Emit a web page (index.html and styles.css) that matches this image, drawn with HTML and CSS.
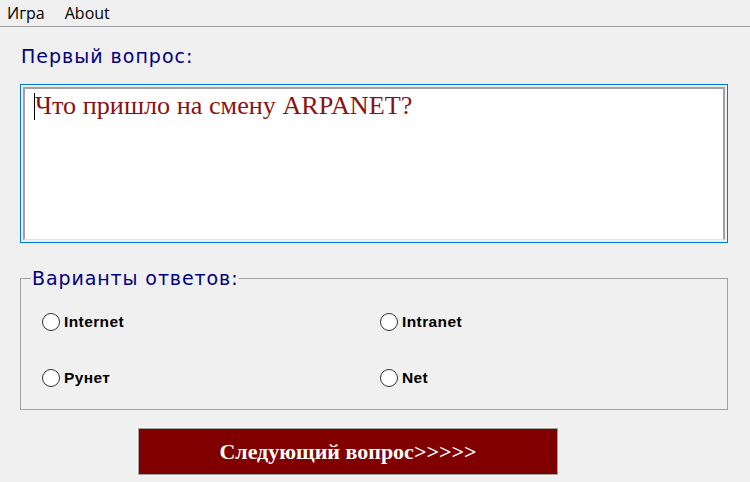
FILE: index.html
```html
<!DOCTYPE html>
<html lang="ru">
<head>
<meta charset="utf-8">
<title>Тест</title>
<link rel="stylesheet" href="styles.css">
</head>
<body>
<div class="menubar">
  <span class="menu-item">Игра</span>
  <span class="menu-item">About</span>
</div>
<main class="content">
  <div class="label">Первый вопрос:</div>
  <div class="question-box">
    <div class="question-inner"><span class="caret"></span>Что пришло на смену ARPANET?</div>
  </div>
  <fieldset class="answers">
    <legend class="legend">Варианты ответов:</legend>
    <div class="grid">
      <label class="option"><span class="radio"></span>Internet</label>
      <label class="option"><span class="radio"></span>Intranet</label>
      <label class="option"><span class="radio"></span>Рунет</label>
      <label class="option"><span class="radio"></span>Net</label>
    </div>
  </fieldset>
  <div class="btn-row">
    <div class="next-btn">Следующий вопрос&gt;&gt;&gt;&gt;&gt;</div>
  </div>
</main>
</body>
</html>
```
FILE: styles.css
```css
html, body {
  margin: 0;
  padding: 0;
  background: #f0f0f0;
  width: 750px;
  height: 482px;
  overflow: hidden;
}
.menubar {
  height: 26px;
  border-bottom: 1px solid #a0a0a0;
  display: flex;
  align-items: center;
  gap: 20px;
  padding-left: 7px;
  font-family: "Open Sans", "Noto Sans", sans-serif;
  font-size: 16px;
  color: #000;
}
.content {
  padding: 0 22px 0 20px;
}
.label {
  margin-top: 18px;
  height: 22px;
  padding-left: 1px;
  font-family: "DejaVu Sans", sans-serif;
  font-size: 19px;
  letter-spacing: 1px;
  line-height: 22px;
  color: #000080;
}
.question-box {
  margin-top: 17px;
  height: 159px;
  border: 1px solid #0078d7;
  padding: 2px;
  box-sizing: border-box;
}
.question-inner {
  height: 100%;
  box-sizing: border-box;
  background: #fff;
  border-top: 2px solid #a0a0a0;
  border-left: 2px solid #a0a0a0;
  border-right: 2px solid #a0a0a0;
  border-bottom: 1px solid #e3e3e3;
  padding: 2px 0 0 9px;
  font-family: "Liberation Serif", serif;
  font-size: 26.2px;
  line-height: 30px;
  color: #8b1212;
}
.caret {
  display: inline-block;
  width: 1px;
  height: 27px;
  background: #000;
  vertical-align: -6px;
}
.answers {
  margin: 24px 0 0 0;
  border: 1px solid #a0a0a0;
  height: 143px;
  box-sizing: border-box;
  padding: 24px 0 0 21px;
  min-width: 0;
}
.legend {
  padding: 0 1px;
  margin-left: -11px;
  font-family: "DejaVu Sans", sans-serif;
  font-size: 19px;
  letter-spacing: 0.9px;
  line-height: 22px;
  color: #000080;
}
.grid {
  display: grid;
  grid-template-columns: 338px 1fr;
  row-gap: 38px;
}
.option {
  display: flex;
  align-items: center;
  gap: 4px;
  height: 18px;
  font-family: "Liberation Sans", Arial, sans-serif;
  font-weight: bold;
  font-size: 15.5px;
  letter-spacing: 0.4px;
  color: #000;
}
.radio {
  width: 16px;
  height: 16px;
  border: 1px solid #333;
  border-radius: 50%;
  background: #fff;
  flex: none;
}
.btn-row {
  display: flex;
  padding-left: 118px;
  margin-top: 18px;
}
.next-btn {
  width: 420px;
  height: 47px;
  box-sizing: border-box;
  border: 1px solid #a0a0a0;
  outline: 1px solid #f8f8f8;
  background: #800000;
  color: #fff;
  font-family: "Liberation Serif", serif;
  font-weight: bold;
  font-size: 22px;
  display: flex;
  align-items: center;
  justify-content: center;
}
```
